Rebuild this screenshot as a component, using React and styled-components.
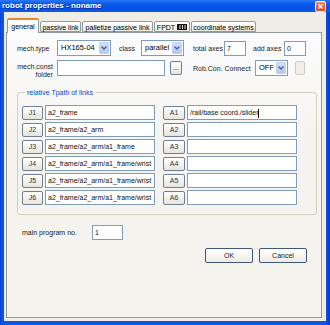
import React from 'react';
import styled, { createGlobalStyle } from 'styled-components';

const GlobalStyle = createGlobalStyle`
  html, body {
    margin: 0;
    padding: 0;
    background: #ffffff;
  }
  body {
    font-family: "Liberation Sans", Arial, sans-serif;
  }
`

const Window = styled.div`
  width: 330px;
  height: 325px;
  display: flex;
  flex-direction: column;
  background: linear-gradient(to right, #0a3fd0 0, #0b55e6 2px, #0b55e6 326px, #0838c0 100%);
  font-size: 7px;
  color: #000;
`

const TitleBar = styled.div`
  height: 12px;
  flex: none;
  display: flex;
  align-items: center;
  justify-content: space-between;
  padding: 0 4px 0 2px;
  background: linear-gradient(to bottom, #2a7af5 0%, #0b5ae8 30%, #0553e6 70%, #0a5be9 100%);
`

const Title = styled.span`
  color: #ffffff;
  font-weight: bold;
  font-size: 8px;
  line-height: 12px;
  text-shadow: 1px 1px 0 #0a2d96;
`

const CloseBox = styled.div`
  width: 9px;
  height: 9px;
  display: flex;
  align-items: center;
  justify-content: center;
  border: 1px solid #ffffff;
  border-radius: 2px;
  background: linear-gradient(to bottom, #e98a6a, #d9461f);
`

const Frame = styled.div`
  flex: 1;
  display: flex;
  flex-direction: column;
  margin: 0 4px 4px 4px;
  background: #efede5;
`

const TabRow = styled.div`
  height: 20px;
  flex: none;
  display: flex;
  align-items: flex-end;
  padding-left: 3px;
  gap: 1px;
`

const Tab = styled.div`
  position: relative;
  z-index: ${p => (p.$active ? 2 : 1)};
  width: ${p => p.$w}px;
  height: ${p => (p.$active ? 15 : 11)}px;
  margin-bottom: ${p => (p.$active ? -1 : 0)}px;
  box-sizing: border-box;
  display: flex;
  align-items: center;
  justify-content: center;
  gap: 2px;
  border: 1px solid #919b9c;
  border-bottom: ${p => (p.$active ? 'none' : '1px solid #919b9c')};
  border-top: ${p => (p.$active ? '2px solid #e68b2c' : '1px solid #919b9c')};
  border-radius: 2px 2px 0 0;
  background: ${p => (p.$active ? '#fcfcfe' : 'linear-gradient(to bottom, #ffffff, #ecebe5)')};
  white-space: nowrap;
  line-height: 9px;
  padding-top: ${p => (p.$active ? 0 : 1)}px;
`

const Panel = styled.div`
  flex: 1;
  display: flex;
  flex-direction: column;
  margin: 0 4px 3px 2px;
  padding: 7px 4px 0 10px;
  border: 1px solid #919b9c;
  background: linear-gradient(to bottom, #fcfcfe, #f4f3ee 40%);
`

const Row = styled.div`
  display: flex;
  align-items: center;
  height: 16px;
  margin-top: ${p => p.$mt || 0}px;
`

const Label = styled.span`
  flex: none;
  width: ${p => p.$w}px;
  margin-left: ${p => p.$ml || 0}px;
  white-space: nowrap;
  color: #222;
`

const StackLabel = styled.div`
  flex: none;
  align-self: flex-start;
  width: 36px;
  margin-right: 4px;
  padding-top: 3px;
  text-align: right;
  line-height: 8px;
  color: #222;
`

const Combo = styled.div`
  flex: none;
  width: ${p => p.$w}px;
  height: 16px;
  box-sizing: border-box;
  display: flex;
  align-items: stretch;
  border: 1px solid #7f9db9;
  background: #ffffff;
`

const ComboText = styled.span`
  flex: 1;
  padding-left: 3px;
  line-height: 14px;
  font-size: 7.5px;
`

const ComboArrow = styled.span`
  width: 10px;
  margin: 1px;
  display: flex;
  align-items: center;
  justify-content: center;
  border-radius: 1px;
  background: linear-gradient(to bottom, #d3e0fd, #b2c7f6);
  border: 1px solid #c0d0f5;
  box-sizing: border-box;
`

const Field = styled.div`
  flex: none;
  width: ${p => p.$w}px;
  height: ${p => p.$h || 15}px;
  box-sizing: border-box;
  border: 1px solid #7f9db9;
  background: #ffffff;
  padding: 0 2px;
  line-height: ${p => (p.$h || 15) - 2}px;
  white-space: nowrap;
  overflow: hidden;
  font-size: 7px;
  color: #111;
`

const Caret = styled.span`
  display: inline-block;
  width: 1px;
  height: 9px;
  background: #000;
  vertical-align: middle;
`

const SmallButton = styled.div`
  flex: none;
  width: ${p => p.$w}px;
  height: 14px;
  margin-left: ${p => p.$ml || 0}px;
  box-sizing: border-box;
  display: flex;
  align-items: center;
  justify-content: center;
  border: 1px solid ${p => (p.$disabled ? '#cfcdc3' : '#6d7f99')};
  border-radius: 2px;
  background: ${p => (p.$disabled ? '#f1efe8' : 'linear-gradient(to bottom, #ffffff, #e7e5dd)')};
  line-height: 8px;
`

const Group = styled.fieldset`
  margin: 12px 0 0 0;
  padding: 8px 0 9px 4px;
  min-width: 0;
  border: 1px solid #d0d0bf;
  border-radius: 3px;
`

const Caption = styled.legend`
  margin-left: 3px;
  padding: 0 2px;
  line-height: 9px;
  color: #0046d5;
`

const LinkList = styled.div`
  display: flex;
  flex-direction: column;
  gap: 2px;
`

const LinkRow = styled.div`
  display: flex;
  align-items: center;
  height: 15px;
`

const LinkButton = styled.div`
  flex: none;
  width: ${p => p.$w}px;
  height: 14px;
  margin-left: ${p => p.$ml || 0}px;
  margin-right: 2px;
  box-sizing: border-box;
  display: flex;
  align-items: center;
  justify-content: center;
  border: 1px solid #6f7f96;
  border-radius: 2px;
  background: linear-gradient(to bottom, #ffffff, #e6e4dc);
  color: #333;
`

const ButtonBar = styled.div`
  display: flex;
  justify-content: flex-end;
  gap: 6px;
  margin-top: 8px;
  padding-right: 10px;
`

const DialogButton = styled.div`
  width: 48px;
  height: 15px;
  box-sizing: border-box;
  display: flex;
  align-items: center;
  justify-content: center;
  border: 1px solid #3f5878;
  border-radius: 2px;
  background: linear-gradient(to bottom, #ffffff, #ecebe4);
  color: #222;
`

const Arrow = () => (
  <svg width="6" height="4" viewBox="0 0 6 4">
    <path d="M0.5 0.5 L3 3 L5.5 0.5" fill="none" stroke="#4d6185" strokeWidth="1.4" />
  </svg>
)

const FpdtIcon = () => (
  <svg width="10" height="6" viewBox="0 0 10 6">
    <rect x="0" y="0" width="10" height="6" fill="#111" />
    <rect x="2.5" y="1" width="1" height="4" fill="#ddd" />
    <rect x="5" y="1" width="1" height="4" fill="#ddd" />
    <rect x="7.5" y="1" width="1" height="4" fill="#ddd" />
  </svg>
)

const links = [
  { j: 'a2_frame', a: '/rail/base coord./slider' },
  { j: 'a2_frame/a2_arm', a: '' },
  { j: 'a2_frame/a2_arm/a1_frame', a: '' },
  { j: 'a2_frame/a2_arm/a1_frame/wrist', a: '' },
  { j: 'a2_frame/a2_arm/a1_frame/wrist', a: '' },
  { j: 'a2_frame/a2_arm/a1_frame/wrist', a: '' },
]

const App = () => {
  return (
    <>
      <GlobalStyle />
      <Window>
        <TitleBar>
          <Title>robot properties - noname</Title>
          <CloseBox>
            <svg width="5" height="5" viewBox="0 0 5 5">
              <path d="M0.5 0.5 L4.5 4.5 M4.5 0.5 L0.5 4.5" stroke="#fff" strokeWidth="1.2" />
            </svg>
          </CloseBox>
        </TitleBar>
        <Frame>
          <TabRow>
            <Tab $w={32} $active>general</Tab>
            <Tab $w={41}>passive link</Tab>
            <Tab $w={71}>palletize passive link</Tab>
            <Tab $w={36}>FPDT <FpdtIcon /></Tab>
            <Tab $w={65}>coordinate systems</Tab>
          </TabRow>
          <Panel>
            <Row>
              <Label $w={40}>mech.type</Label>
              <Combo $w={54}>
                <ComboText>HX165-04</ComboText>
                <ComboArrow><Arrow /></ComboArrow>
              </Combo>
              <Label $w={22} $ml={8}>class</Label>
              <Combo $w={43}>
                <ComboText>parallel</ComboText>
                <ComboArrow><Arrow /></ComboArrow>
              </Combo>
              <Label $w={31} $ml={9}>total axes</Label>
              <Field $w={22}>7</Field>
              <Label $w={31} $ml={7}>add axes</Label>
              <Field $w={22}>0</Field>
            </Row>
            <Row $mt={4}>
              <StackLabel>mech.const<br />folder</StackLabel>
              <Field $w={108} $h={16}></Field>
              <SmallButton $w={12} $ml={5}>...</SmallButton>
              <Label $w={62} $ml={11}>Rob.Con. Connect</Label>
              <Combo $w={33}>
                <ComboText>OFF</ComboText>
                <ComboArrow><Arrow /></ComboArrow>
              </Combo>
              <SmallButton $w={10} $ml={7} $disabled />
            </Row>
            <Group>
              <Caption>relative Tpath of links</Caption>
              <LinkList>
                {links.map((l, i) => (
                  <LinkRow key={i}>
                    <LinkButton $w={21}>J{i + 1}</LinkButton>
                    <Field $w={110}>{l.j}</Field>
                    <LinkButton $w={22} $ml={8}>A{i + 1}</LinkButton>
                    <Field $w={110}>
                      {l.a}
                      {i === 0 && <Caret />}
                    </Field>
                  </LinkRow>
                ))}
              </LinkList>
            </Group>
            <Row $mt={9}>
              <Label $w={70} $ml={5}>main program no.</Label>
              <Field $w={31}>1</Field>
            </Row>
            <ButtonBar>
              <DialogButton>OK</DialogButton>
              <DialogButton>Cancel</DialogButton>
            </ButtonBar>
          </Panel>
        </Frame>
      </Window>
    </>
  )
}

export default App
